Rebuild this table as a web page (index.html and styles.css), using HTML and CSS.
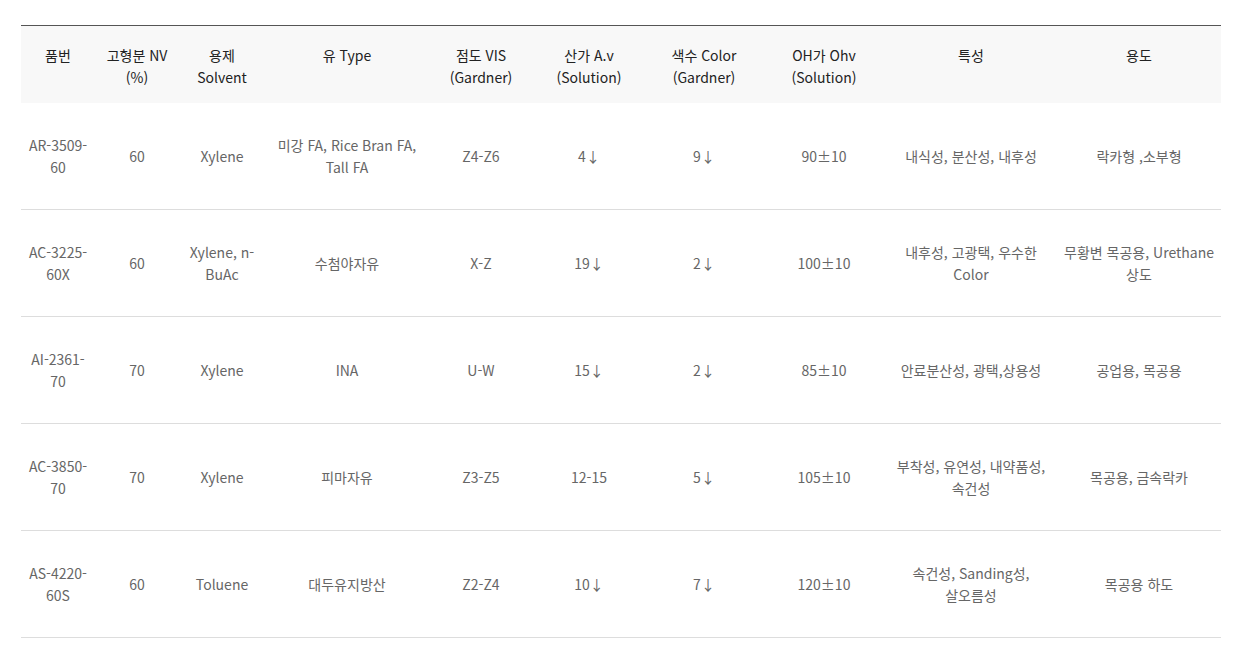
FILE: index.html
```html
<!DOCTYPE html>
<html lang="ko">
<head>
<meta charset="utf-8">
<link rel="stylesheet" href="styles.css">
</head>
<body>
<div class="wrap">
<table class="spec">
<colgroup>
<col class="c1"><col class="c2"><col class="c3"><col class="c4"><col class="c5"><col class="c6"><col class="c7"><col class="c8"><col class="c9"><col class="c10">
</colgroup>
<thead>
<tr>
<th>품번</th>
<th>고형분 NV<br>(%)</th>
<th>용제<br>Solvent</th>
<th>유 Type</th>
<th>점도 VIS<br>(Gardner)</th>
<th>산가 A.v<br>(Solution)</th>
<th>색수 Color<br>(Gardner)</th>
<th>OH가 Ohv<br>(Solution)</th>
<th>특성</th>
<th>용도</th>
</tr>
</thead>
<tbody>
<tr>
<td>AR-3509-60</td><td>60</td><td>Xylene</td><td>미강 FA, Rice Bran FA, Tall FA</td><td>Z4-Z6</td><td>4↓</td><td>9↓</td><td>90±10</td><td>내식성, 분산성, 내후성</td><td>락카형 ,소부형</td>
</tr>
<tr>
<td>AC-3225-60X</td><td>60</td><td>Xylene, n-BuAc</td><td>수첨야자유</td><td>X-Z</td><td>19↓</td><td>2↓</td><td>100±10</td><td>내후성, 고광택, 우수한 Color</td><td>무황변 목공용, Urethane 상도</td>
</tr>
<tr>
<td>AI-2361-70</td><td>70</td><td>Xylene</td><td>INA</td><td>U-W</td><td>15↓</td><td>2↓</td><td>85±10</td><td>안료분산성, 광택,상용성</td><td>공업용, 목공용</td>
</tr>
<tr>
<td>AC-3850-70</td><td>70</td><td>Xylene</td><td>피마자유</td><td>Z3-Z5</td><td>12-15</td><td>5↓</td><td>105±10</td><td>부착성, 유연성, 내약품성, 속건성</td><td>목공용, 금속락카</td>
</tr>
<tr>
<td>AS-4220-60S</td><td>60</td><td>Toluene</td><td>대두유지방산</td><td>Z2-Z4</td><td>10↓</td><td>7↓</td><td>120±10</td><td>속건성, Sanding성, 살오름성</td><td>목공용 하도</td>
</tr>
</tbody>
</table>
</div>
</body>
</html>
```

FILE: styles.css
```css
html, body {
  margin: 0;
  padding: 0;
  background: #fff;
}
body {
  font-family: "Noto Sans CJK KR", "Noto Sans", sans-serif;
  font-size: 14px;
  line-height: 22px;
  color: #666;
}
.wrap {
  padding: 25px 0 0 21px;
}
.spec {
  width: 1200px;
  border-collapse: collapse;
  table-layout: fixed;
  border-top: 1px solid #555;
}
.c1 { width: 74px; }
.c2 { width: 84px; }
.c3 { width: 86px; }
.c4 { width: 164px; }
.c5 { width: 104px; }
.c6 { width: 112px; }
.c7 { width: 118px; }
.c8 { width: 122px; }
.c9 { width: 172px; }
.c10 { width: 164px; }
.spec th {
  background: #f8f8f8;
  color: #222;
  font-weight: 400;
  height: 77px;
  box-sizing: border-box;
  padding: 18px 5px 0;
  text-align: center;
  vertical-align: top;
}
.spec td {
  height: 106px;
  padding: 0 5px;
  text-align: center;
  vertical-align: middle;
  border-bottom: 1px solid #ddd;
  word-break: keep-all;
}
```
